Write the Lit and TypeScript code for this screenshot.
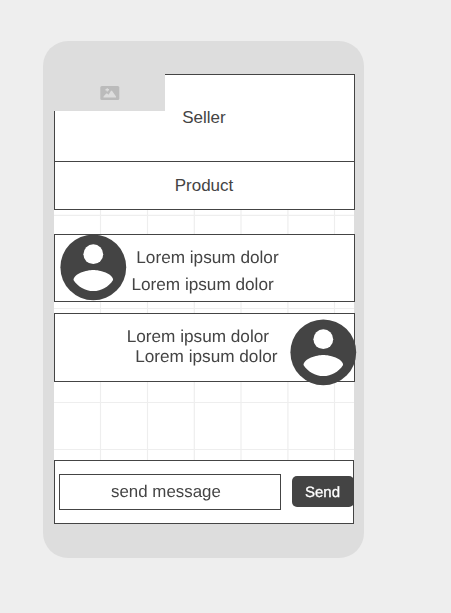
import { LitElement, html, css, svg } from "lit";
import { customElement, property } from "lit/decorators.js";

@customElement("user-avatar")
class UserAvatar extends LitElement {
  static styles = css`
    :host { display: block; width: 67px; height: 67px; }
    svg { display: block; width: 67px; height: 67px; }
    .disc { fill: #444; }
    .person { fill: #fff; }
  `;
  render() {
    return html`<svg viewBox="0 0 67 67">
      <circle class="disc" cx="33.3" cy="33.3" r="32.9" />
      <circle class="person" cx="33.3" cy="20.2" r="9.9" />
      <path class="person" d="M33.3 36C26.7 36 13.7 39.6 13.5 45.9C17.8 52.6 25.1 57 33.3 57C41.5 57 48.8 52.6 53.1 45.9C52.9 39.6 39.9 36 33.3 36Z" />
    </svg>`;
  }
}

@customElement("chat-message")
class ChatMessage extends LitElement {
  @property({ type: Array }) lines: string[] = [];
  @property({ reflect: true }) side = "left";
  static styles = css`
    :host {
      display: block; position: relative; box-sizing: border-box;
      border: 1px solid #444; background: #fff; width: 301px;
    }
    :host([side="left"]) { height: 68px; padding: 9px 0 0 76px; }
    :host([side="right"]) { height: 69px; padding: 12px 0 0 71px; }
    .line {
      white-space: nowrap; will-change: transform;
      font-size: 17.2px; text-rendering: geometricPrecision;
    }
    :host([side="left"]) .line { line-height: 27px; padding-left: 0.4px; }
    :host([side="right"]) .line { line-height: 20px; padding-left: 0.7px; }
    :host([side="left"]) .first { padding-left: 5.3px; }
    :host([side="right"]) .second { padding-left: 9.2px; }
    user-avatar { position: absolute; }
    :host([side="left"]) user-avatar { left: 5px; top: -1px; }
    :host([side="right"]) user-avatar { left: 235px; top: 5px; }
  `;
  render() {
    return html`
      <div class="line first">${this.lines[0]}</div>
      <div class="line second">${this.lines[1]}</div>
      <user-avatar></user-avatar>
    `;
  }
}

@customElement("app-root")
class AppRoot extends LitElement {
  static styles = css`
    :host {
      display: block; box-sizing: border-box; height: 613px; padding: 41px 0 0 43px;
      background: #eee; color: #444; overflow: hidden;
      font: 17px "Liberation Sans", Arial, sans-serif;
    }
    .phone {
      box-sizing: border-box; width: 321px; height: 517px; padding: 33px 0 0 11px;
      border-radius: 25px; background: #ddd;
    }
    .screen {
      position: relative; display: flex; flex-direction: column;
      width: 300px; height: 450px; background: #fff;
    }
    .grid { position: absolute; left: 0; top: 0; width: 300px; height: 450px; }
    .grid path { stroke: #eee; stroke-width: 1.2; fill: none; }
    .panel {
      position: relative; box-sizing: border-box; width: 301px; flex: none;
      display: flex; align-items: center; justify-content: center; padding-right: 1px;
      border: 1px solid #444; background: #fff;
    }
    .seller { height: 88px; }
    .product { height: 49px; margin-top: -1px; }
    .image {
      position: absolute; left: -1px; top: -1px; width: 111px; height: 37px; box-sizing: border-box;
      display: flex; align-items: center; justify-content: center; background: #ddd;
      padding: 1px 0 0 1px;
    }
    .image svg { width: 20px; height: 15px; display: block; }
    .messages { display: flex; flex-direction: column; gap: 11px; margin-top: 24px; }
    .composer {
      position: relative; box-sizing: border-box; width: 300px; height: 64px; margin-top: auto;
      display: flex; align-items: center; padding-left: 4px;
      border: 1px solid #444; background: #fff;
    }
    .field {
      box-sizing: border-box; width: 222px; height: 36px; flex: none; margin-top: -1px;
      display: flex; align-items: center; justify-content: center; padding-right: 8px;
      border: 1px solid #444;
    }
    .field span { font-size: 16.9px; will-change: transform; text-rendering: geometricPrecision; }
    .send {
      width: 62px; height: 31px; flex: none; margin: 0 0 1px 11px; padding: 1px 1px 0 0;
      border: 0; border-radius: 5px; background: #444; color: #fff;
      font: 15px "Liberation Sans", Arial, sans-serif; text-rendering: geometricPrecision;
      -webkit-text-stroke: 0.3px #fff; will-change: transform;
    }
  `;

  render() {
    const columns = [46.5, 93.5, 140.3, 187, 233.9, 280.5];
    const rows = [141.4, 234.5, 328.5, 375.5];
    return html`
      <div class="phone">
        <div class="screen">
          <svg class="grid" viewBox="0 0 300 450">
            ${columns.map((x) => svg`<path d="M${x} 0V450" />`)}
            ${rows.map((y) => svg`<path d="M0 ${y}H300" />`)}
          </svg>
          <div class="panel seller">
            <div class="image">
              <svg viewBox="0 0 20 15">
                <rect x="0.3" y="0.1" width="19" height="14" rx="1.5" fill="#bbb" />
                <path fill="#ddd" d="M3.5 11.5V10.5L6.2 7.5H7.2L8.5 8.7L11 4.7H12L16 10.5V11.5ZM6.6 2.2H7.9V3.1H9V4.4H7.9V5.4H6.6V4.4H5.5V3.1H6.6Z" />
              </svg>
            </div>
            Seller
          </div>
          <div class="panel product">Product</div>
          <div class="messages">
            <chat-message side="left" .lines=${["Lorem ipsum dolor", "Lorem ipsum dolor"]}></chat-message>
            <chat-message side="right" .lines=${["Lorem ipsum dolor", "Lorem ipsum dolor"]}></chat-message>
          </div>
          <div class="composer">
            <div class="field"><span>send message</span></div>
            <button class="send">Send</button>
          </div>
        </div>
      </div>
    `;
  }
}
